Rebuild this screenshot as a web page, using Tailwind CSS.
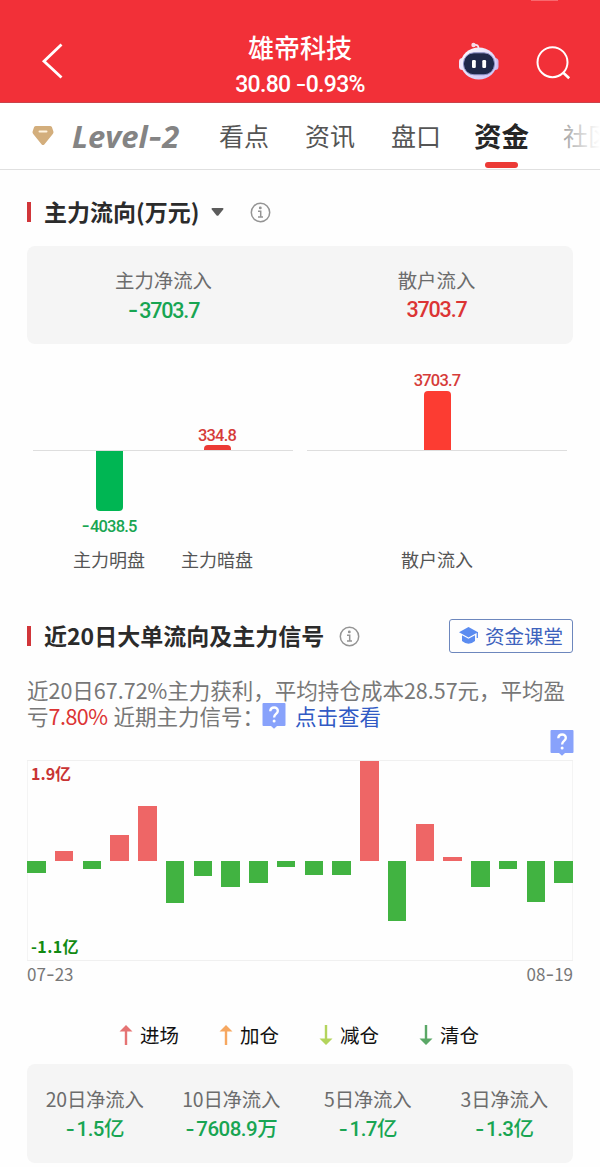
<!DOCTYPE html>
<html lang="zh-CN">
  <head>
    <meta charset="UTF-8" />
    <meta name="viewport" content="width=device-width, initial-scale=1.0" />
    <title>雄帝科技 - 资金</title>
    <script src="https://cdn.jsdelivr.net/npm/@tailwindcss/browser@4"></script>
  </head>
  <body class="bg-[#fefefe] font-['Noto_Sans_CJK_SC',sans-serif] text-[#2b2b2b] overflow-hidden">
    <div class="w-[600px] h-[1167px] overflow-hidden">
      <!-- Header -->
      <header class="relative h-[103px] bg-[#f23038] border-b border-[#c9434a] flex items-start text-white">
        <span class="absolute left-[531px] top-0 w-[27px] h-px bg-[#f8686e]"></span>
        <div class="w-[200px] pl-[40px] pt-[42px]">
          <svg width="26" height="38" viewBox="0 0 26 38" fill="none" stroke="#fff" stroke-width="2.8"><path d="M21.5 2.5 4 19.2 21.5 35.5" /></svg>
        </div>
        <div class="w-[200px] pt-[31px] text-center">
          <h1 class="text-[26px] leading-[32px] font-medium">雄帝科技</h1>
          <p class="mt-[10px] text-[23px] leading-[22px] tracking-[-0.700px] font-['Roboto'] font-medium whitespace-nowrap">30.80 <span class="font-['Inter'] font-normal text-[24px]">-</span>0.93%</p>
        </div>
        <div class="w-[200px] flex pl-[58px] pt-[41px]">
          <svg width="42" height="42" viewBox="0 0 42 42">
            <defs>
              <linearGradient id="shell" x1="0" y1="0" x2="1" y2="1">
                <stop offset="0" stop-color="#fff" />
                <stop offset="1" stop-color="#c9bdf5" />
              </linearGradient>
            </defs>
            <path d="M20.500 7.500c0-3-1-4-4.500-3.500" fill="none" stroke="#f4e4f4" stroke-width="1.800" />
            <circle cx="15.500" cy="4" r="2.200" fill="#f6dce8" />
            <rect x="1" y="17" width="7" height="12" rx="3.500" fill="#f3e6fa" />
            <rect x="33.500" y="17" width="7" height="12" rx="3.500" fill="#cdb9ee" />
            <ellipse cx="20.800" cy="22.500" rx="18" ry="16" fill="url(#shell)" />
            <rect x="5.500" y="11.800" width="31" height="22" rx="10.500" fill="#1f2849" stroke="#8f93c9" stroke-width="1" />
            <rect x="14" y="19" width="3.800" height="8" rx="1.200" fill="#fff" />
            <rect x="24.300" y="19" width="3.800" height="8" rx="1.200" fill="#fff" />
          </svg>
          <svg class="ml-[34px] mt-[2px]" width="38" height="38" viewBox="0 0 38 38" fill="none" stroke="#fff" stroke-width="2"><circle cx="18.500" cy="19.200" r="15" /><path d="m29 29.500 6.200 5.800" stroke-width="2.600" /></svg>
        </div>
      </header>

      <!-- Tabs -->
      <nav class="relative h-[67px] border-b border-[#e0e0e0] bg-white flex items-center overflow-hidden text-[25px] text-[#555] whitespace-nowrap">
        <svg class="ml-[32px] shrink-0" width="22" height="20" viewBox="0 0 22 20"><path d="M4 0h14q1.200 0 1.900 1l1.500 4.600q.4 1.400-.6 2.500L12.300 18.500q-1.300 1.200-2.600 0L1.200 8.100Q.2 7 .6 5.600L2.100 1Q2.800 0 4 0Z" fill="#d3ae7c" /><path d="M7.500 5.500h7" stroke="#fff3df" stroke-width="2" stroke-linecap="round" /></svg>
        <span class="ml-[18px] w-[147px] shrink-0 text-[31px] leading-[40px] font-bold italic font-['Open_Sans'] text-[#848484]">Level<span class="font-['Inter']">-</span>2</span>
        <span class="w-[86px] shrink-0">看点</span>
        <span class="w-[86px] shrink-0">资讯</span>
        <span class="w-[83px] shrink-0">盘口</span>
        <span class="relative w-[89px] shrink-0 text-[27.500px] font-bold text-[#262626]">资金
          <i class="absolute left-[11px] top-[47px] w-[33px] h-[6px] rounded-[3px] bg-[#ec3a36]"></i>
        </span>
        <span class="shrink-0 text-[#555]">社区</span>
        <span class="absolute right-0 top-0 w-[44px] h-[65px] bg-linear-to-r from-white/35 via-white/80 via-65% to-white"></span>
      </nav>

      <main class="px-[27px]">
        <!-- Main fund flow -->
        <section>
          <div class="h-[76px] pt-[26px] flex items-start">
            <div class="h-[32px] flex items-center">
              <span class="w-[4px] h-[20px] bg-[#d1363a]"></span>
              <h2 class="ml-[13px] mb-[2px] text-[23px] leading-[32px] font-bold">主力流向(万元)</h2>
              <svg class="ml-[12px]" width="13" height="8" viewBox="0 0 13 8"><path d="M1.500 0h10q1.600.3.700 1.600L7.600 7.200q-1.100 1-2.200 0L.8 1.600Q0 .3 1.500 0Z" fill="#5c5c5c" /></svg>
              <svg class="ml-[26px]" width="21" height="21" viewBox="0 0 21 21" fill="none" stroke="#949494" stroke-width="1.500"><circle cx="10.500" cy="10.500" r="9.200" /><path d="M8 9.200h2.700v5.600M8 14.900h5" /><circle cx="10.300" cy="5.900" r=".7" fill="#949494" /></svg>
            </div>
          </div>
          <div class="h-[98px] rounded-lg bg-[#f5f5f5] grid grid-cols-2 pt-[19px] text-center">
            <div>
              <p class="text-[19.400px] leading-[30px] text-[#6c6c6c]">主力净流入</p>
              <p class="text-[21.500px] leading-[30px] tracking-[-1.200px] font-medium font-['Roboto'] text-[#18a552]"><span class="font-['Inter'] text-[23px] mr-[2px]">-</span>3703.7</p>
            </div>
            <div>
              <p class="text-[19.400px] leading-[30px] text-[#6c6c6c]">散户流入</p>
              <p class="text-[21.500px] leading-[30px] tracking-[-1.200px] font-medium font-['Roboto'] text-[#dc3434]">3703.7</p>
            </div>
          </div>

          <div class="mt-[16px] px-[6px] flex gap-[14px] text-center text-[18px] text-[#555]">
            <div class="w-[260px]">
              <div class="h-[91px] border-b border-[#dedede] flex justify-center items-end">
                <div class="w-[108px]"></div>
                <div class="w-[108px] flex flex-col items-center">
                  <span class="text-[16.500px] leading-[19px] tracking-[-0.800px] font-medium font-['Roboto'] text-[#d63c3a]">334.8</span>
                  <span class="w-[27px] h-[5px] rounded-t bg-[#ec3a36]"></span>
                </div>
              </div>
              <div class="h-[93px] flex justify-center">
                <div class="w-[108px] flex flex-col items-center">
                  <span class="w-[27px] h-[60px] rounded-b bg-[#00b653]"></span>
                  <span class="mt-[5px] text-[16.500px] leading-[20px] tracking-[-0.800px] font-medium font-['Roboto'] text-[#18a552]"><span class="font-['Inter'] text-[18px] mr-px">-</span>4038.5</span>
                </div>
                <div class="w-[108px]"></div>
              </div>
              <div class="flex justify-center leading-[30px]">
                <span class="w-[108px]">主力明盘</span>
                <span class="w-[108px]">主力暗盘</span>
              </div>
            </div>
            <div class="w-[260px]">
              <div class="h-[91px] border-b border-[#dedede] flex flex-col items-center justify-end">
                <span class="text-[16.500px] leading-[20px] tracking-[-0.800px] font-medium font-['Roboto'] text-[#d63c3a]">3703.7</span>
                <span class="w-[27px] h-[59px] rounded-t bg-[#fc3c32]"></span>
              </div>
              <div class="h-[93px]"></div>
              <span class="block leading-[30px]">散户流入</span>
            </div>
          </div>
        </section>

        <!-- 20-day flow and signals -->
        <section class="mt-[45px]">
          <div class="h-[34px] flex items-center">
            <span class="w-[4px] h-[20px] bg-[#d1363a]"></span>
            <h2 class="ml-[13px] mb-[2px] text-[23px] leading-[32px] font-bold">近20日大单流向及主力信号</h2>
            <svg class="ml-[15px]" width="21" height="21" viewBox="0 0 21 21" fill="none" stroke="#949494" stroke-width="1.500"><circle cx="10.500" cy="10.500" r="9.200" /><path d="M8 9.200h2.700v5.600M8 14.900h5" /><circle cx="10.300" cy="5.900" r=".7" fill="#949494" /></svg>
            <a class="ml-auto w-[124px] h-[34px] pb-px rounded-[3px] border border-[#6d87bd] flex items-center justify-center text-[19.500px] text-[#3d62bd]">
              <svg class="mr-[6px]" width="20" height="17" viewBox="0 0 20 17"><path d="M9.500 0 19 5.200 9.500 10.400 0 5.200Z" fill="#5b8cf0" /><path d="M3 8.300v5.700q6.500 5.500 13 0V8.300L9.500 11.800Z" fill="#5b8cf0" /><path d="M18.300 5v6" stroke="#5b8cf0" stroke-width="1.300" /></svg>
              资金课堂
            </a>
          </div>

          <div class="mt-[24px] text-[21.500px] leading-[26px] text-[#777] whitespace-nowrap">
            <p>近20日67.72%主力获利，平均持仓成本28.57元，平均盈</p>
            <p class="flex items-center">亏<span class="tracking-[-0.500px] text-[#dc3434]">7.80%</span><span class="ml-[6px]">近期主力信号：</span>
              <svg class="-ml-[2px]" width="24" height="26" viewBox="0 0 24 26"><path d="M1.500 0h21q1 0 1 1v21q0 1-1 1H15l-3 2.800L9 23H1.500q-1 0-1-1V1q0-1 1-1Z" fill="#88a2fb" /><path d="M8.300 8.300c.2-5.200 7.700-5 7.500-.3-.1 3-3.700 3-3.700 6.500" fill="none" stroke="#fff" stroke-width="2.400" /><circle cx="12.100" cy="18" r="1.500" fill="#fff" /></svg>
              <a class="ml-[9px] text-[#315ac4]">点击查看</a>
            </p>
          </div>

          <div class="h-[31px] pt-px flex justify-end">
            <svg class="-mr-[0.500px]" width="24" height="26" viewBox="0 0 24 26"><path d="M1.500 0h21q1 0 1 1v21q0 1-1 1H15l-3 2.800L9 23H1.500q-1 0-1-1V1q0-1 1-1Z" fill="#88a2fb" /><path d="M8.300 8.300c.2-5.200 7.700-5 7.500-.3-.1 3-3.700 3-3.700 6.500" fill="none" stroke="#fff" stroke-width="2.400" /><circle cx="12.100" cy="18" r="1.500" fill="#fff" /></svg>
          </div>

          <div class="relative h-[201px] border-y border-[#f0f0f0] shadow-[inset_1px_0_#f4f4f4,inset_-1px_0_#f4f4f4]">
            <div id="bars" class="h-full flex justify-between"></div>
            <span class="absolute left-[4px] top-[2px] text-[16px] leading-[20px] font-bold text-[#c93434]">1.9亿</span>
            <span class="absolute left-[4px] bottom-[4px] text-[16px] leading-[20px] tracking-[0.400px] font-bold text-[#128a12]">-1.1亿</span>
          </div>
          <div class="h-[24px] flex justify-between text-[17px] leading-[25px] text-[#777]">
            <span>07<span class="font-['Inter'] text-[19px] leading-none">-</span>23</span>
            <span>08<span class="font-['Inter'] text-[19px] leading-none">-</span>19</span>
          </div>

          <div class="mt-[35px] h-[30px] flex justify-center text-[19.500px] leading-[30px] text-[#111]">
            <div class="w-[100px] flex items-center pl-[19px]">
              <svg class="mr-[7px]" width="14" height="20" viewBox="0 0 14 20"><path d="M7 0 13.500 6.500H8.200V20H5.800V6.500H.5Z" fill="#e57373" /></svg>进场
            </div>
            <div class="w-[100px] flex items-center pl-[19px]">
              <svg class="mr-[7px]" width="14" height="20" viewBox="0 0 14 20"><path d="M7 0 13.500 6.500H8.200V20H5.800V6.500H.5Z" fill="#f6a760" /></svg>加仓
            </div>
            <div class="w-[100px] flex items-center pl-[19px]">
              <svg class="mr-[7px]" width="14" height="20" viewBox="0 0 14 20"><path d="M7 20 .5 13.500h5.300V0h2.400v13.500h5.300Z" fill="#b3d45c" /></svg>减仓
            </div>
            <div class="w-[100px] flex items-center pl-[19px]">
              <svg class="mr-[7px]" width="14" height="20" viewBox="0 0 14 20"><path d="M7 20 .5 13.500h5.300V0h2.400v13.500h5.300Z" fill="#5aa766" /></svg>清仓
            </div>
          </div>

          <div class="mt-[14px] h-[99px] rounded-lg bg-[#f5f5f5] grid grid-cols-4 pt-[20px] text-center text-[19.400px] leading-[30px] tracking-[-0.200px]">
            <div class="-ml-px">
              <p class="text-[#6c6c6c]">20日净流入</p>
              <p class="text-[20.500px] tracking-[-0.500px] font-medium font-['Roboto','Noto_Sans_CJK_SC'] text-[#18a552]"><span class="font-['Inter'] mr-[2px]">-</span>1.5亿</p>
            </div>
            <div class="-ml-px">
              <p class="text-[#6c6c6c]">10日净流入</p>
              <p class="text-[20.500px] tracking-[-0.500px] font-medium font-['Roboto','Noto_Sans_CJK_SC'] text-[#18a552]"><span class="font-['Inter'] mr-[2px]">-</span>7608.9万</p>
            </div>
            <div class="-ml-px">
              <p class="text-[#6c6c6c]">5日净流入</p>
              <p class="text-[20.500px] tracking-[-0.500px] font-medium font-['Roboto','Noto_Sans_CJK_SC'] text-[#18a552]"><span class="font-['Inter'] mr-[2px]">-</span>1.7亿</p>
            </div>
            <div class="-ml-px">
              <p class="text-[#6c6c6c]">3日净流入</p>
              <p class="text-[20.500px] tracking-[-0.500px] font-medium font-['Roboto','Noto_Sans_CJK_SC'] text-[#18a552]"><span class="font-['Inter'] mr-[2px]">-</span>1.3亿</p>
            </div>
          </div>
        </section>
      </main>
    </div>

    <script>
      // Daily net flow, 100 is half the height of the chart
      const flow = [-11.5, 10, -8, 26, 55.5, -41.5, -15, -25.5, -22, -6, -13.5, -14, 100, -60, 37, 4.5, -25.5, -8, -41, -21.5];
      const bars = document.getElementById("bars");

      flow.forEach((value) => {
        const column = document.createElement("div");
        column.className = "w-[18.500px] h-full";
        const half = document.createElement("div");
        const bar = document.createElement("div");
        if (value > 0) {
          half.className = "h-[100px] flex items-end";
          bar.className = "w-full bg-[#ee6666]";
        } else {
          half.className = "h-full pt-[100px]";
          bar.className = "w-full bg-[#41b341]";
        }
        bar.style.height = Math.abs(value) + "px";
        half.appendChild(bar);
        column.appendChild(half);
        bars.appendChild(column);
      });
    </script>
  </body>
</html>
